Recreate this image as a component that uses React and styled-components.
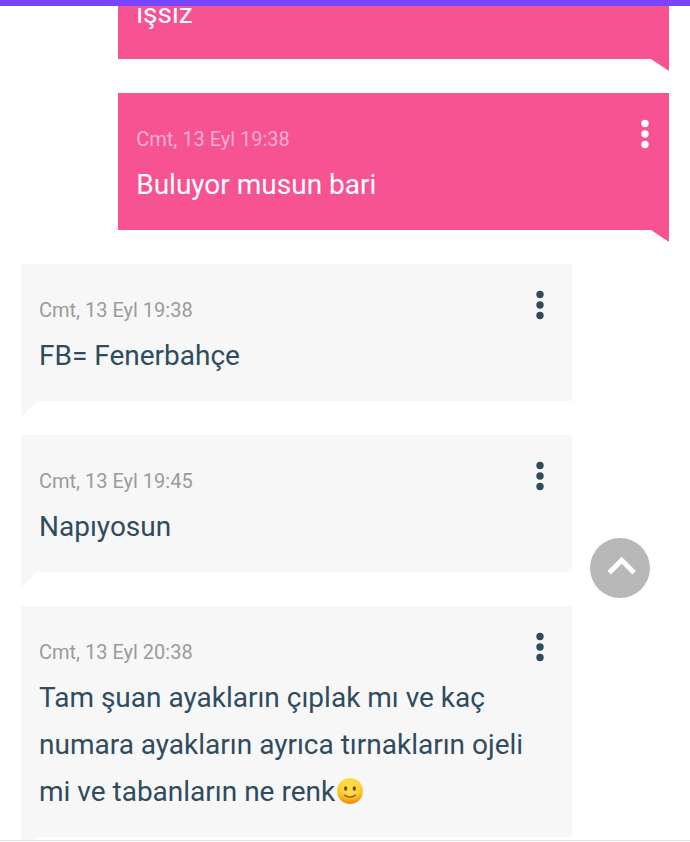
import React, { Component } from 'react';
import styled, { createGlobalStyle } from 'styled-components';

const GlobalStyle = createGlobalStyle`
  * {
    box-sizing: border-box;
  }
  body {
    margin: 0;
    background: #fff;
    font-family: Roboto, 'Noto Sans', sans-serif;
  }
`;

const Screen = styled.div`
  display: flex;
  flex-direction: column;
  height: 100vh;
`;

const TopBar = styled.header`
  flex: none;
  height: 6px;
  background: #7646ff;
`;

/* column-reverse keeps the thread scrolled to the newest message */
const Thread = styled.main`
  display: flex;
  flex: 1;
  flex-direction: column-reverse;
  min-height: 0;
  overflow-y: auto;
  scrollbar-width: none;
`;

const MessageList = styled.ul`
  display: flex;
  flex: none;
  flex-direction: column;
  gap: 34px;
  margin: 0;
  padding: 0 21px 3px;
  list-style: none;
`;

const Bubble = styled.li`
  position: relative;
  display: flex;
  align-items: flex-start;
  align-self: ${p => (p.$own ? 'flex-end' : 'flex-start')};
  width: 85%;
  padding: 22px ${p => (p.$own ? 16 : 24)}px 22px 18px;
  color: ${p => (p.$own ? '#fff' : '#2f4b5e')};
  background: ${p => (p.$own ? '#f75292' : '#f7f7f7')};

  &::after {
    content: '';
    position: absolute;
    top: 100%;
    ${p => (p.$own ? 'right: 0;' : 'left: 0;')}
    width: ${p => (p.$own ? 18 : 16)}px;
    height: ${p => (p.$own ? 12 : 16)}px;
    background: inherit;
    clip-path: ${p =>
      p.$own
        ? 'polygon(0 0, 100% 0, 100% 100%)'
        : 'polygon(0 0, 100% 0, 0 100%)'};
  }
`;

const Content = styled.div`
  flex: 1;
  min-width: 0;
`;

const Time = styled.time`
  display: block;
  padding-top: 2px;
  font-size: 20px;
  line-height: 44px;
  color: ${p => (p.$own ? '#fdb0d0' : '#9b9b9b')};
`;

const Text = styled.p`
  margin: 0;
  font-size: 28px;
  line-height: 47px;
`;

const MenuButton = styled.button`
  display: flex;
  flex: none;
  width: 16px;
  height: 38px;
  align-items: center;
  justify-content: center;
  padding: 0;
  border: none;
  color: inherit;
  background: transparent;
  cursor: pointer;
`;

const Emoji = styled.svg`
  width: 28px;
  height: 28px;
  margin-left: 1px;
  vertical-align: -4px;
`;

const ScrollTopButton = styled.button`
  position: fixed;
  right: 40px;
  bottom: 244px;
  width: 60px;
  height: 60px;
  padding: 0;
  border: none;
  border-radius: 50%;
  background: #b8b8b8;
  cursor: pointer;
  & > svg {
    display: block;
  }
`;

const BottomBar = styled.footer`
  flex: none;
  height: 2px;
  border-top: 1px solid #e3e3e3;
`;

const SmileIcon = () => (
  <Emoji viewBox="0 0 28 28" role="img" aria-label="🙂">
    <defs>
      <linearGradient id="smile-face" x1="0" y1="0" x2="0" y2="1">
        <stop offset="0" stopColor="#ffdc48" />
        <stop offset="0.55" stopColor="#fdc62d" />
        <stop offset="1" stopColor="#ec8c0b" />
      </linearGradient>
      <radialGradient id="smile-glow" cx="0.5" cy="0.45" r="0.5">
        <stop offset="0.5" stopColor="#ffe250" stopOpacity="0.7" />
        <stop offset="1" stopColor="#ffcd30" stopOpacity="0" />
      </radialGradient>
    </defs>
    <circle cx="14" cy="14" r="13" fill="url(#smile-face)" />
    <circle cx="14" cy="14" r="12" fill="url(#smile-glow)" />
    <ellipse cx="9.7" cy="11.5" rx="1.6" ry="2.3" fill="#78400d" />
    <ellipse cx="18.3" cy="11.5" rx="1.6" ry="2.3" fill="#78400d" />
    <path
      d="M8.8 18.2q5.2 3.8 10.4 0"
      fill="none"
      stroke="#8a4a0c"
      strokeWidth="1.4"
      strokeLinecap="round"
    />
  </Emoji>
);

const MESSAGES = [
  { id: 1, own: true, text: 'işsiz' },
  { id: 2, own: true, time: 'Cmt, 13 Eyl 19:38', text: 'Buluyor musun bari' },
  { id: 3, time: 'Cmt, 13 Eyl 19:38', text: 'FB= Fenerbahçe' },
  { id: 4, time: 'Cmt, 13 Eyl 19:45', text: 'Napıyosun' },
  {
    id: 5,
    time: 'Cmt, 13 Eyl 20:38',
    text:
      'Tam şuan ayakların çıplak mı ve kaç numara ayakların ayrıca tırnakların ojeli mi ve tabanların ne renk',
    smile: true
  }
];

const Message = ({ own, time, text, smile }) => (
  <Bubble $own={own}>
    <Content>
      {time && <Time $own={own}>{time}</Time>}
      <Text>
        {text}
        {smile && <SmileIcon />}
      </Text>
    </Content>
    {time && (
      <MenuButton type="button" aria-label="Menü">
        <svg width="8" height="30" viewBox="0 0 8 30" fill="currentColor">
          <circle cx="4" cy="4.5" r="3.7" />
          <circle cx="4" cy="15" r="3.7" />
          <circle cx="4" cy="25.5" r="3.7" />
        </svg>
      </MenuButton>
    )}
  </Bubble>
);

export default class App extends Component {
  thread = React.createRef();

  scrollToTop = () => {
    const el = this.thread.current;
    el.scrollTo({ top: -el.scrollHeight, behavior: 'smooth' });
  };

  render = () => (
    <Screen>
      <GlobalStyle />
      <TopBar />
      <Thread ref={this.thread}>
        <MessageList>
          {MESSAGES.map(m => (
            <Message key={m.id} {...m} />
          ))}
        </MessageList>
      </Thread>
      <ScrollTopButton
        type="button"
        aria-label="Yukarı"
        onClick={this.scrollToTop}
      >
        <svg width="60" height="60" viewBox="0 0 60 60">
          <path
            d="M19.2 34.7L31.7 22.2L44.2 34.7"
            fill="none"
            stroke="#fff"
            strokeWidth="5"
          />
        </svg>
      </ScrollTopButton>
      <BottomBar />
    </Screen>
  );
}
